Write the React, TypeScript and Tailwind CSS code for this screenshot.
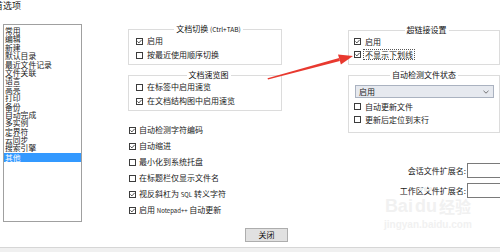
import type { ReactNode } from "react";

const listItems = [
  "常用",
  "编辑",
  "新建",
  "默认目录",
  "最近文件记录",
  "文件关联",
  "语言",
  "高亮",
  "打印",
  "备份",
  "自动完成",
  "多实例",
  "定界符",
  "云同步",
  "搜索引擎",
];

function Box({ checked }: { checked?: boolean }) {
  return (
    <span className="flex h-[7px] w-[7px] shrink-0 items-center justify-center border border-[#3c3c3c] bg-white">
      {checked && (
        <svg width="5" height="5" viewBox="0 0 5 5">
          <path d="M0.4 2.4 L1.9 3.9 L4.6 0.9" stroke="#222" strokeWidth="0.8" fill="none" />
        </svg>
      )}
    </span>
  );
}

function Check({
  checked,
  children,
  row = "h-[13px]",
  gap = "gap-[4px]",
}: {
  checked?: boolean;
  children: ReactNode;
  row?: string;
  gap?: string;
}) {
  return (
    <div className={`flex items-center ${row} ${gap}`}>
      <Box checked={checked} />
      <span className="whitespace-nowrap leading-[10px]">{children}</span>
    </div>
  );
}

function Legend({ children }: { children: ReactNode }) {
  return (
    <legend className="mx-auto whitespace-nowrap px-[2px] text-[8px] leading-[10px] text-[#111]">
      {children}
    </legend>
  );
}

export default function App() {
  return (
    <div
      className="relative h-[252px] w-[500px] overflow-hidden bg-white text-[8px] text-[#1b1b1b]"
      style={{ fontFamily: '"Noto Sans CJK SC", "Noto Sans", sans-serif' }}
    >
      {/* window title, cut at the left edge */}
      <div className="-ml-[6px] h-[24px] pt-[1px] text-[9px] leading-[10px] text-[#222]">首选项</div>

      <div className="flex h-[200px]">
        {/* category list */}
        <div className="ml-[3px] h-[198px] w-[79px] border border-[#a0a0a0] pt-[2px]">
          {listItems.map((item) => (
            <div key={item} className="h-[8.4px] pl-[1px] text-[7.8px] leading-[8.4px]">
              {item}
            </div>
          ))}
          <div className="h-[9px] bg-[#3399ff] pl-[1px] text-[7.8px] leading-[9px] text-white">其他</div>
        </div>

        {/* middle column */}
        <div className="ml-[46px] w-[154px]">
          <fieldset className="border border-[#dcdcdc] pb-[2px] pl-[7px]">
            <Legend>
              文档切换 <span className="text-[6.5px]">(Ctrl+TAB)</span>
            </Legend>
            <Check checked row="h-[14px]">启用</Check>
            <Check row="h-[14px]">按最近使用顺序切换</Check>
          </fieldset>

          <fieldset className="mt-[5px] border border-[#dcdcdc] pb-[2px] pl-[7px]">
            <Legend>文档速览图</Legend>
            <Check row="h-[14px]">在标签中启用速览</Check>
            <Check checked row="h-[14px]">在文档结构图中启用速览</Check>
          </fieldset>

          <div className="mt-[11px] pl-[1px]">
            <Check checked row="h-[16px]" gap="gap-[3px]">自动检测字符编码</Check>
            <Check checked row="h-[16px]" gap="gap-[3px]">自动缩进</Check>
            <Check row="h-[16px]" gap="gap-[3px]">最小化到系统托盘</Check>
            <Check row="h-[16px]" gap="gap-[3px]">在标题栏仅显示文件名</Check>
            <Check checked row="h-[16px]" gap="gap-[3px]">
              视反斜杠为 <span className="text-[6px]">SQL</span> 转义字符
            </Check>
            <Check checked row="h-[16px]" gap="gap-[3px]">
              启用 <span className="text-[6px]">Notepad++</span> 自动更新
            </Check>
          </div>
        </div>

        {/* right column */}
        <div className="ml-[66px] w-[152px] pt-[1px]">
          <fieldset className="border border-[#dcdcdc] pb-[3px] pl-[5px]">
            <Legend>超链接设置</Legend>
            <Check checked>启用</Check>
            <div className="flex h-[13px] items-center gap-[3px]">
              <Box checked />
              <span className="whitespace-nowrap px-[1px] leading-[9px] outline outline-1 outline-dotted outline-[#555]">
                不显示下划线
              </span>
            </div>
          </fieldset>

          <fieldset className="mt-[5px] border border-[#dcdcdc] pb-[6px] pl-[5px] pr-[5px]">
            <Legend>自动检测文件状态</Legend>
            <div className="mt-[5px] ml-[1px] flex h-[13px] items-center justify-between border border-[#aab2c0] bg-[#e6e9ef] pl-[3px] pr-[4px]">
              <span className="leading-[10px]">启用</span>
              <svg width="6" height="4" viewBox="0 0 6 4">
                <path d="M0.5 0.8 L3 3.2 L5.5 0.8" stroke="#555" strokeWidth="0.8" fill="none" />
              </svg>
            </div>
            <div className="mt-[2px]">
              <Check>自动更新文件</Check>
              <Check>更新后定位到末行</Check>
            </div>
          </fieldset>

          <div className="mt-[30px] flex h-[15px] items-center">
            <span className="w-[118px] shrink-0 text-right leading-[10px]">会话文件扩展名:</span>
            <span className="ml-[1px] h-[15px] w-[40px] shrink-0 border border-[#7a7a7a] bg-white" />
          </div>
          <div className="mt-[5px] flex h-[15px] items-center">
            <span className="w-[118px] shrink-0 text-right leading-[10px]">工作区文件扩展名:</span>
            <span className="ml-[1px] h-[15px] w-[40px] shrink-0 border border-[#7a7a7a] bg-white" />
          </div>
        </div>
      </div>

      {/* close button */}
      <div className="mt-[4px] flex">
        <button className="ml-[245px] h-[14px] w-[43px] border border-[#adadad] bg-[#e1e1e1] text-[8px] leading-[12px] text-[#111]">
          关闭
        </button>
      </div>

      {/* bottom edge */}
      <div className="mt-[5px] h-[10px] border-t border-[#d6d6d6] bg-[#f0f0f0]" />

      {/* baidu watermark */}
      <div className="pointer-events-none absolute left-[384px] top-[196px] flex flex-col items-center text-[#f1f1f1]">
        <div className="flex items-end gap-[2px] text-[18px] font-bold leading-[20px]" style={{ fontFamily: '"Liberation Sans", sans-serif' }}>
          <span>Bai</span>
          <span className="relative">
            du
            <span className="absolute -top-[9px] left-[4px] flex gap-[2px]">
              <span className="h-[4px] w-[3px] rounded-full bg-[#f1f1f1]" />
              <span className="h-[5px] w-[3px] rounded-full bg-[#f1f1f1]" />
              <span className="h-[4px] w-[3px] rounded-full bg-[#f1f1f1]" />
            </span>
          </span>
          <span className="text-[16px]" style={{ fontFamily: '"Noto Sans CJK SC", sans-serif' }}>
            经验
          </span>
        </div>
        <div className="mt-[3px] text-[10px] font-bold leading-[11px]" style={{ fontFamily: '"Liberation Sans", sans-serif' }}>
          jingyan.baidu.com
        </div>
      </div>

      {/* red pointer arrow */}
      <svg className="pointer-events-none absolute left-0 top-0" width="500" height="252">
        <polygon points="267.5,78.2 339.1,58 339.9,61 268,79.4" fill="#e8392f" />
        <polygon points="353,56 338,54.5 340.9,64.6" fill="#e8392f" />
      </svg>
    </div>
  );
}
